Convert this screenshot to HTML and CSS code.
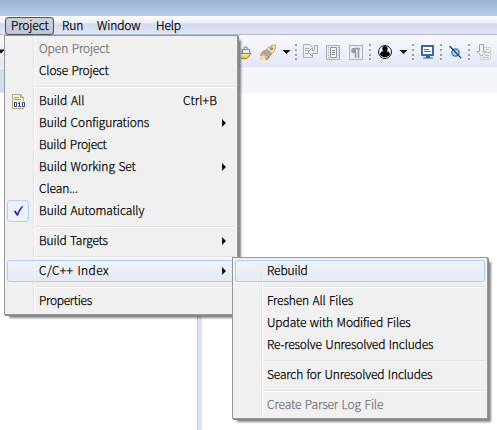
FILE: index.html
```html
<!DOCTYPE html>
<html lang="en">
<head>
<meta charset="utf-8">
<title>Project menu</title>
<link rel="stylesheet" href="styles.css">
</head>
<body>
<div class="titlebar"></div>
<nav class="menubar">
  <span class="top open"><span class="t-project">Project</span></span>
  <span class="top t-run">Run</span>
  <span class="top t-window">Window</span>
  <span class="top t-help">Help</span>
</nav>
<div class="toolbar">
  <svg class="first" width="5" height="32" viewBox="0 0 5 32"><path d="M-3 14.500h8l-4 4z" fill="#111"/></svg>
  <svg width="256" height="32" viewBox="241 35 256 32">
    <defs>
      <linearGradient id="gold" x2="0" y2="1"><stop stop-color="#ffe9a8"/><stop offset="1" stop-color="#eebc55"/></linearGradient>
      <g id="grip" fill="#a5a194"><path d="M0 0h2v2h-2zM0 5h2v2h-2zM0 10h2v2h-2zM0 14h2v2h-2z"/></g>
    </defs>
    <path d="M238 50h10v5h-10z" fill="#f3dca2" stroke="#a57b38"/>
    <path d="M242.500 49.500h7v5h-7z" fill="#e9f1fb" stroke="#7893b5"/><path d="M244 49v-2h3v2" fill="none" stroke="#6f8cac"/>
    <path d="M237 58.500l4-5h10l-4 5z" fill="url(#gold)" stroke="#b27a22"/>
    <g stroke-linejoin="round">
      <path d="M265.500 50.500l-3 1-2 4 4-1z" fill="#ef9f56" stroke="#d58c52"/>
      <path d="M270 55l-1 3-3 2v-4z" fill="#ef9f56" stroke="#d58c52"/>
      <path d="M264 52c3-4 7-7 11.500-7 .5 4-2 8-6 11l-3 2-4-4z" fill="#ffe5a0" stroke="#d69c45"/>
      <path d="M264 51.500l3-2 5 4-4 3.500-4-3z" fill="#aba7aa" stroke="#898585" stroke-width=".6"/>
      <circle cx="271.500" cy="48.700" r="1.300" fill="#7f9dbe" stroke="#536f91" stroke-width=".6"/>
      <path d="M263 55l3 2-6 2.500z" fill="#fff4ba" stroke="#e0ad62" stroke-width=".6"/>
    </g>
    <path d="M282.500 50h8l-4 4z" fill="#161616"/>
    <use href="#grip" x="295" y="44"/>
    <g fill="#eeeeef" stroke="#b0b0b3">
      <path d="M303.500 44.500h6l3 3v10h-9z"/>
      <path d="M305 48.500h4M305 50.500h4M305 53.500h3" fill="none"/>
      <path d="M314.500 45.500h3v8h-5v3l-4.500-4.500 4.500-4.500v3h2z" stroke="#a6a6a9"/>
      <path d="M326.500 45.500h13v14h-13z"/>
      <path d="M330.500 47.500h6v10h-6z" fill="#f7f7f7" stroke="#929295"/><path d="M332 50.500h3M332 52.500h3M332 54.500h3" stroke="#88888b"/>
      <path d="M328.500 47v11M338.500 47v11" stroke-dasharray="1 1"/>
      <path d="M349.500 45.500h13v14h-13z"/>
      <path d="M360 48.500h-6a2 2 0 0 0 0 4h1.500v5.500M358.500 49v9" fill="none" stroke="#9d9da0" stroke-width="1.700"/><path d="M353 49h3v3h-3z" fill="#9d9da0" stroke="none"/>
    </g>
    <use href="#grip" x="369" y="44"/>
    <circle cx="385" cy="52" r="6.500" fill="#f8f8f8" stroke="#191919"/><circle cx="385" cy="48.800" r="2.700"/><path d="M380 54.500c0-2.500 2-3.500 5-3.500s5 1 5 3.500c-2 3.500-8 3.500-10 0z"/>
    <path d="M399.500 50h8l-4 4z" fill="#161616"/>
    <use href="#grip" x="412" y="44"/>
    <path d="M422 46h11v9h-11z" fill="#f8fbff" stroke="#3768a8" stroke-width="2"/><path d="M424 49.500h5M424 51.500h7" stroke="#5474a0"/><path d="M426 56h4v1.500h3v1h-10v-1h3z" fill="#315f9d"/>
    <use href="#grip" x="440" y="44"/>
    <circle cx="455.500" cy="52.500" r="3.700" fill="#a5d3eb" stroke="#397baa" stroke-width="1.300"/><path d="M449.500 46l11.500 12" stroke="#283e72" stroke-width="1.300"/>
    <use href="#grip" x="468" y="44"/>
    <path d="M483.500 47.500h7v12h-10v-3" fill="#eeeeef" stroke="#d2d2d4"/><path d="M486 49.500h3M487 52.500h3M485 55.500h4M482 57.500h7" stroke="#bdbdc0"/><path d="M479.500 44.500h4v7h2.500l-4.500 4.500-4.500-4.500h2.500z" fill="#f5f5f5" stroke="#a2a2a5"/>
  </svg>
</div>
<div class="tabband"></div>
<main class="workspace"><div class="left-pane"></div><div class="sash"></div></main>

<div class="menu main-menu">
  <div class="row off"><span class="w-open">Open Project</span></div>
  <div class="row"><span class="w-close">Close Project</span></div>
  <div class="sep"></div>
  <div class="row">
    <svg class="build" width="14" height="16" viewBox="0 0 14 16"><path d="M.5.500h8l3 3v11H.5z" fill="#fff9df" stroke="#b8a879"/><path d="M8.500.5v3h3z" fill="#e1c56f" stroke="#b8a879"/><path d="M2 3.500h5M2 5.500h7" stroke="#7898c4"/><path d="M1 7h13v7H1z" fill="#e4edf7"/><path d="M2.500 8.500h2v4h-2zM7.500 8v5M6 9.500h1.500M6 12.500h3M10.500 8.500h2v4h-2z" fill="none" stroke="#344b7b"/></svg>
    <span class="w-all">Build All</span><span class="key">Ctrl+B</span></div>
  <div class="row sub"><span class="w-conf">Build Configurations</span></div>
  <div class="row"><span class="w-bproj">Build Project</span></div>
  <div class="row sub"><span class="w-set">Build Working Set</span></div>
  <div class="row"><span class="w-clean">Clean...</span></div>
  <div class="row"><i class="check"><svg width="20" height="20" viewBox="0 0 20 20"><path d="M6 10.500l1.500-.7 2 3C10.500 9.500 12 7 14.500 5l.5.500c-2.500 3-4 6-5 9H9z" fill="#1515a0" stroke="#1515a0" stroke-width=".3"/></svg></i><span class="w-auto">Build Automatically</span></div>
  <div class="sep"></div>
  <div class="row sub"><span class="w-targets">Build Targets</span></div>
  <div class="sep"></div>
  <div class="row sub hot"><span class="w-index">C/C++ Index</span></div>
  <div class="sep"></div>
  <div class="row"><span class="w-prop">Properties</span></div>
</div>

<div class="menu index-menu">
  <div class="row hot"><span class="w-rebuild">Rebuild</span></div>
  <div class="sep"></div>
  <div class="row"><span class="w-fresh">Freshen All Files</span></div>
  <div class="row"><span class="w-update">Update with Modified Files</span></div>
  <div class="row"><span class="w-resolve">Re-resolve Unresolved Includes</span></div>
  <div class="sep"></div>
  <div class="row"><span class="w-search">Search for Unresolved Includes</span></div>
  <div class="sep"></div>
  <div class="row off"><span class="w-log">Create Parser Log File</span></div>
</div>
</body>
</html>
```
FILE: styles.css
```css
* { box-sizing: border-box; }
body {
  margin: 0; width: 497px; height: 430px; overflow: hidden; position: relative;
  display: flex; flex-direction: column; background: #fff; color: #000;
  font: 300 12px/20px "Noto Sans CJK KR", "Noto Sans", sans-serif;
  white-space: nowrap; word-spacing: 1px;
  -webkit-text-stroke: .25px currentColor;
}
svg { display: block; flex: none; }
.titlebar { height: 16px; flex: none; background: linear-gradient(#9ab6d3, #b4cee7); }
.menubar {
  height: 19px; flex: none; display: flex; padding-left: 5px;
  background: linear-gradient(#fff 0, #eef1fa 35%, #d5dbee 45%, #dfe5f5 100%);
  border-bottom: 1px solid #b3b9cc;
}
.top { line-height: 18px; letter-spacing: -.1px; }
.open {
  width: 49px; height: 18px; margin-top: 1px; padding-left: 5px; line-height: 14px;
  border: 1px solid #54575e; border-radius: 3px;
  background: linear-gradient(#d0d4de, #c0c6d7); box-shadow: inset 0 0 1px #696d78;
}
.t-run { margin-left: 8px; width: 35px; }
.t-window { width: 59px; }
.toolbar {
  height: 33px; flex: none; display: flex; justify-content: space-between;
  background: linear-gradient(#f8f9fe, #e3e7f6); border-bottom: 1px solid #e8ebf6;
}
.tabband { height: 25px; flex: none; background: linear-gradient(90deg, #cfdef0 4px, #f4f5fb 4px); border-top: 1px solid #fafbfe; }
.workspace { flex: 1; display: flex; }
.left-pane { width: 197px; }
.sash { width: 5px; background: #dfe4f5; border-left: 1px solid #c7cbdc; }
.menu {
  position: absolute; border: 1px solid #979797; padding: 2px;
  background: linear-gradient(90deg, transparent 28px, #e2e3e3 28px, #e2e3e3 29px, #fff 29px, #fff 30px, transparent 30px) 0 2px / 100% calc(100% - 4px) no-repeat, #f0f0f0;
  box-shadow: 1px 1px 0 #888, 4px 4px 2px -1px rgba(0,0,0,.48);
}
.main-menu { left: 4px; top: 35px; width: 234px; height: 280px; }
.index-menu { left: 232px; top: 257px; width: 256px; height: 162px; }
.row { height: 22px; line-height: 20px; padding-left: 32px; position: relative; display: flex; }
.sep { height: 8px; margin-left: 28px; padding-top: 4px; }
.sep::before { content: ""; display: block; height: 2px; background: linear-gradient(#dfdfdf 50%, #fff 50%); }
.off { color: #777; }
.key { margin-left: auto; margin-right: 18px; letter-spacing: .15px; }
.sub::after {
  content: ""; margin: 7px 9px 0 auto; width: 0; height: 0;
  border-left: 4px solid #111; border-top: 4px solid transparent; border-bottom: 4px solid transparent;
}
.hot { background: linear-gradient(rgba(240,243,249,.75), rgba(221,231,246,.65)); }
.hot::before { content: ""; position: absolute; inset: 0; border: 1px solid #aecff7; border-radius: 3px; }
.build { position: absolute; left: 5px; top: 4px; }
.check { position: absolute; left: 0; top: 0; width: 22px; height: 22px; border: 1px solid #aecff7; border-radius: 3px; background: #edf2fa; }
.w-open, .w-log, .w-clean, .w-rebuild, .w-update { letter-spacing: -.1px; }
.w-close, .w-targets, .w-resolve, .w-search { letter-spacing: -.16px; }
.w-conf, .w-set, .w-auto { letter-spacing: -.06px; }
.w-fresh { letter-spacing: -.12px; }
.w-bproj { letter-spacing: -.2px; }
.w-prop { letter-spacing: -.3px; }
.w-index { letter-spacing: .38px; }
```
